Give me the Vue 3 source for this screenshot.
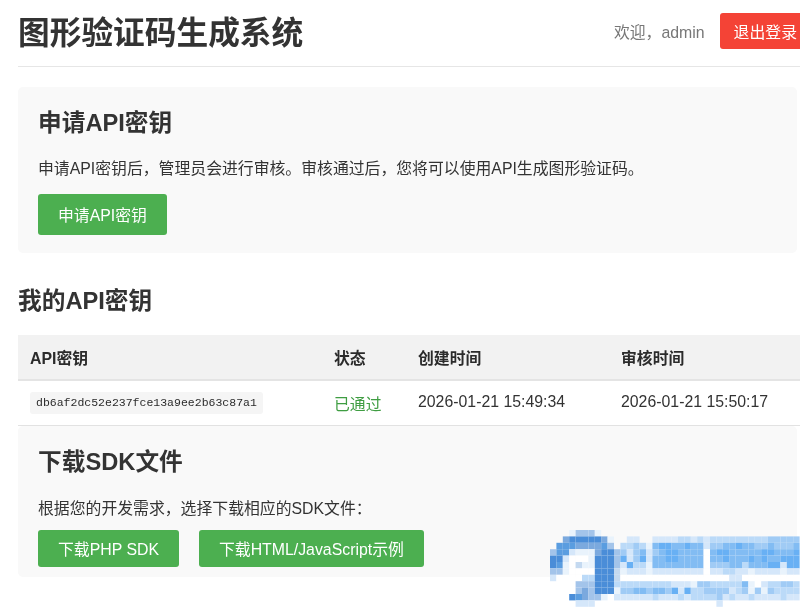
<script setup>
const palette = {
  w: '#ffffff', 1: '#e9f3fc', 2: '#d5e7fa', 3: '#bbdaf8', 4: '#a0cbf5', 5: '#82bcf3', 6: '#68b0f4',
  8: '#5a9de0', 9: '#4a8dd8', a: '#7ba9de', b: '#a3c4ea', c: '#c4d9f0'
}
const rows = [
  '...1bbb1... ..... ........ . ......... .....',
  '..a99999a1. .22.. 22223323 2 333333333 44444',
  '.888aaaa8b. 33431 56655655 2 445565544 54445',
  'b882111a99b 42452 45665555 w 566555556 65556',
  '992www1999b 62462 55665555 w 556555656 55666',
  '981wc11999b 26331 55555555 w 444553555 66266',
  'bb1wwww999c 12221 22222222 w 223322122 22122',
  '2wwww33999c wwwww wwwwwwww w www22wwww wwwww',
  '....bbb9993 33333 33322214 4 3333351w2 33443',
  '....bab9991 44554 55462633 4 444234141 43333',
  '...98abb1.2 22222 32223233 3 342322322 22322',
  '....222.... ..... ........ . .2....... .....'
].map(r => r.replace(/ /g, ''))
const cells = []
rows.forEach((row, y) => {
  for (let x = 0; x < row.length; x++) {
    const fill = palette[row[x]]
    if (fill) cells.push({ key: `${x}-${y}`, x: x * 6.4, y: y * 6.4, fill })
  }
})
</script>

<template>
  <div class="page">
    <header class="top">
      <h1>图形验证码生成系统</h1>
      <div class="user">
        <span class="hello">欢迎，admin</span>
        <button class="btn red">退出登录</button>
      </div>
    </header>

    <section class="panel apply">
      <h2>申请API密钥</h2>
      <p>申请API密钥后，管理员会进行审核。审核通过后，您将可以使用API生成图形验证码。</p>
      <button class="btn green tall">申请API密钥</button>
    </section>

    <h2 class="mine">我的API密钥</h2>
    <table>
      <thead>
        <tr>
          <th class="c1">API密钥</th>
          <th class="c2">状态</th>
          <th class="c3">创建时间</th>
          <th>审核时间</th>
        </tr>
      </thead>
      <tbody>
        <tr>
          <td><code>db6af2dc52e237fce13a9ee2b63c87a1</code></td>
          <td class="ok">已通过</td>
          <td class="time">2026-01-21 15:49:34</td>
          <td class="time">2026-01-21 15:50:17</td>
        </tr>
      </tbody>
    </table>

    <section class="panel sdk">
      <h2>下载SDK文件</h2>
      <p>根据您的开发需求，选择下载相应的SDK文件：</p>
      <div class="actions">
        <button class="btn green">下载PHP SDK</button>
        <button class="btn green">下载HTML/JavaScript示例</button>
      </div>
    </section>

    <svg class="mark" width="250" height="80" viewBox="0 0 250 80" aria-hidden="true">
      <rect v-for="c in cells" :key="c.key" :x="c.x" :y="c.y" width="6.4" height="6.4" :fill="c.fill" />
    </svg>
  </div>
</template>

<style scoped>
.page {
  position: relative;
  width: 800px;
  height: 616px;
  box-sizing: border-box;
  padding: 0 3px 0 18px;
  overflow: hidden;
  background: #fff;
  color: #333;
  font-family: "Liberation Sans", "Noto Sans CJK SC", sans-serif;
  font-size: 15.85px;
  filter: blur(0.45px);
}
.top {
  display: flex;
  align-items: center;
  justify-content: space-between;
  height: 66px;
  margin-right: -3px;
  border-bottom: 1px solid #e6e6e6;
}
h1 {
  margin: 0;
  font-size: 31.7px;
  line-height: 40px;
  font-weight: 700;
}
.user {
  display: flex;
  align-items: center;
  gap: 15px;
  margin-right: -11px;
  flex-shrink: 0;
  padding-bottom: 4px;
}
.hello {
  color: #777;
}
.btn {
  border: 0;
  border-radius: 3px;
  color: #fff;
  font: inherit;
  height: 37px;
  padding: 0 20px;
  white-space: nowrap;
  flex-shrink: 0;
}
.red {
  background: #f44336;
  padding: 0 14px;
  height: 36px;
}
.green {
  background: #4caf50;
}
.tall {
  height: 41px;
}
.panel {
  background: #f9f9f9;
  border-radius: 5px;
}
.apply {
  margin-top: 20px;
  padding: 20px 20px 18px;
}
h2 {
  margin: 0;
  font-size: 23.7px;
  line-height: 32px;
  font-weight: 700;
}
p {
  margin: 18px 0 13px;
  line-height: 24px;
}
.sdk p {
  margin: 19px 0 9px;
}
.mine {
  margin: 32px 0 18px;
}
table {
  width: 782px;
  border-collapse: collapse;
  table-layout: fixed;
}
th,
td {
  padding: 0 12px;
  text-align: left;
}
th {
  height: 44px;
  background: #f2f2f2;
  font-weight: 700;
  color: #2b2b2b;
  border-bottom: 2px solid #e4e4e4;
}
td {
  height: 44px;
  border-bottom: 1px solid #e2e2e2;
}
.time {
  height: 42px;
  padding-bottom: 2px;
}
.c1 {
  width: 280px;
}
.c2 {
  width: 60px;
}
.c3 {
  width: 179px;
}
code {
  display: inline-block;
  padding: 0 6px;
  background: #f5f5f5;
  border-radius: 3px;
  color: #2b2b2b;
  font-family: "Liberation Mono", monospace;
  font-size: 11.5px;
  line-height: 22px;
}
.ok {
  color: #3f9d42;
}
.sdk {
  padding: 20px 20px 10px;
}
.actions {
  display: flex;
  gap: 20px;
}
.mark {
  position: absolute;
  left: 550px;
  top: 530px;
  filter: blur(0.6px);
}
</style>
